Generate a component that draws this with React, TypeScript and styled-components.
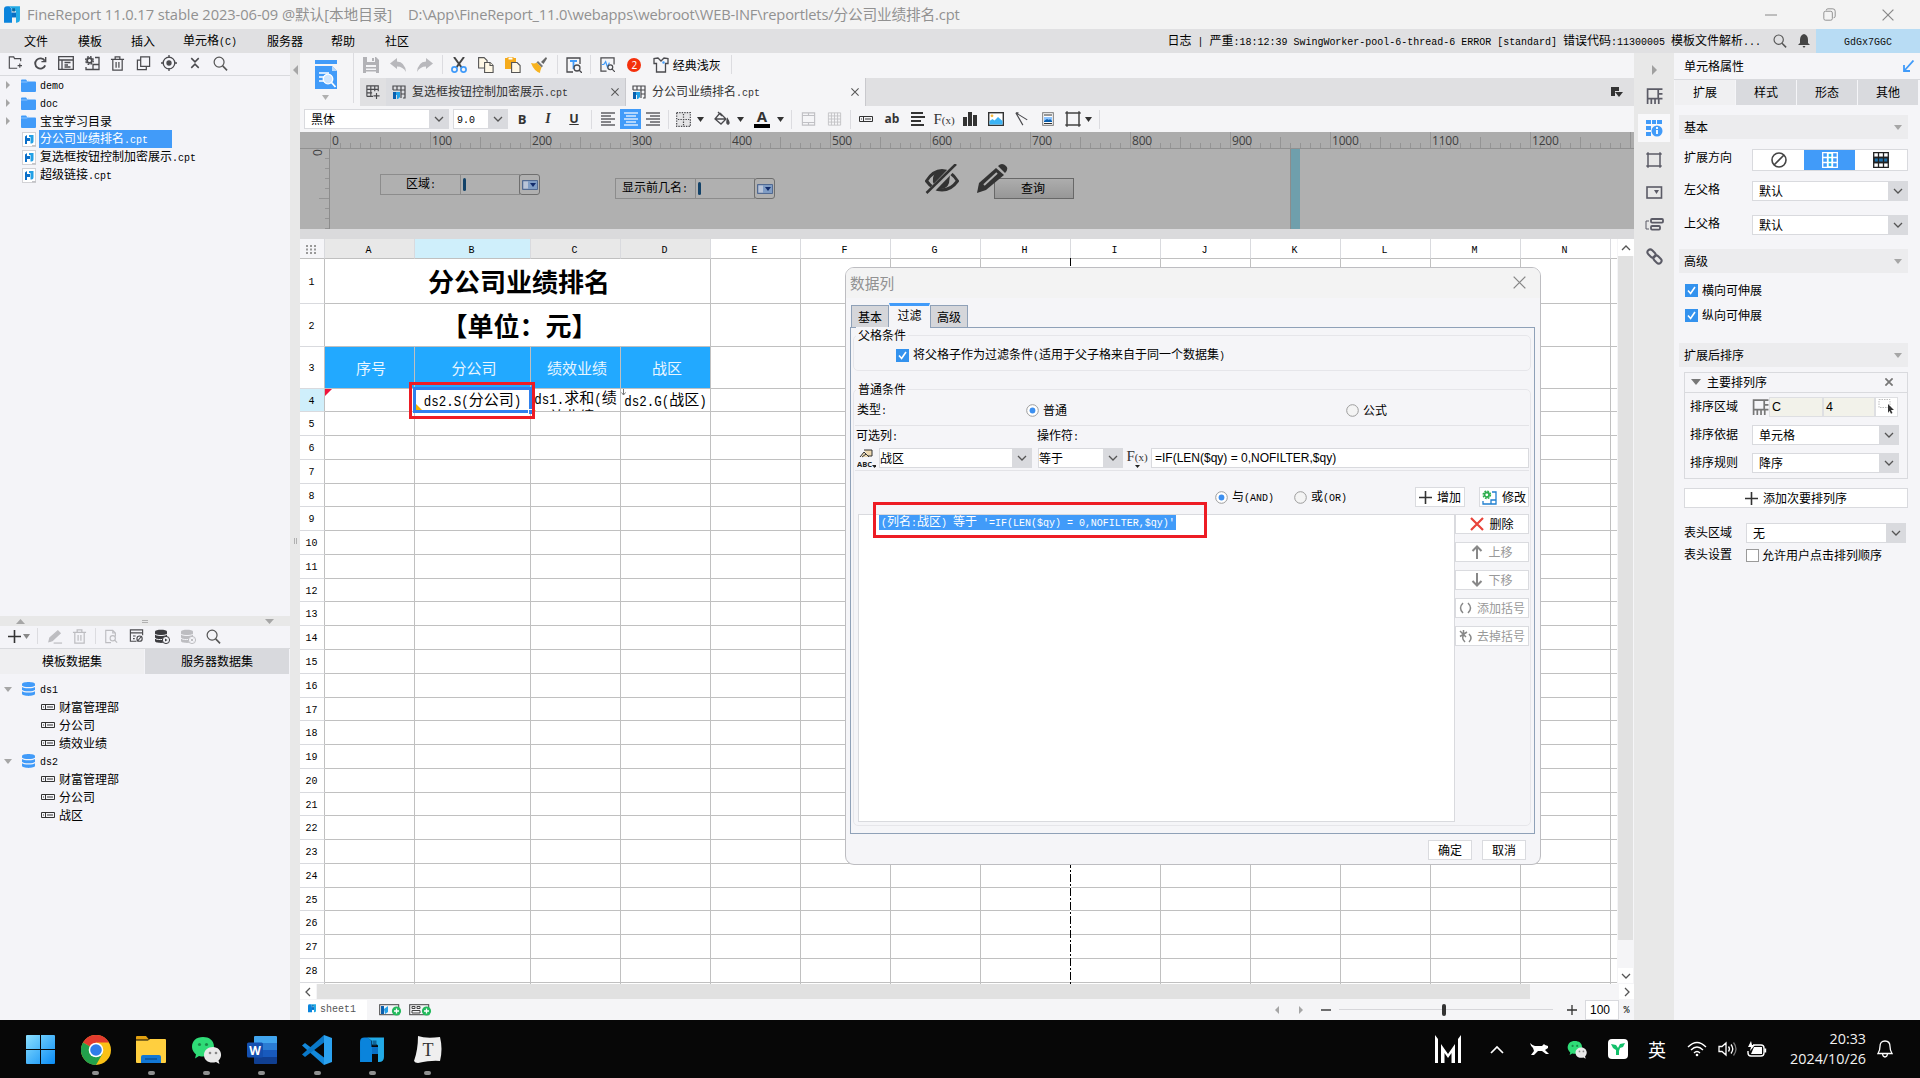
import React from 'react';
import styled, { createGlobalStyle } from 'styled-components';

const CJK = '"Noto Sans CJK SC", sans-serif';

const Global = createGlobalStyle`
  html, body { margin: 0; padding: 0; background: #070707; }
  *, *::before, *::after { box-sizing: border-box; }
  #root { width: 1920px; height: 1078px; overflow: hidden; }
  svg { display: block; flex: none; }
`;

/* ---------- text ---------- */
const Label = styled.span<{ $size?: number; $color?: string; $bold?: boolean }>`
  font-family: ${CJK};
  font-size: ${p => p.$size ?? 12}px;
  line-height: 16px;
  color: ${p => p.$color ?? '#000'};
  font-weight: ${p => (p.$bold ? 700 : 400)};
  white-space: pre;
  flex: none;
`;
const Latin = styled.span`
  display: inline-block;
  font-family: "Liberation Mono", monospace;
  font-size: 0.8333em;
  transform: scaleY(1.18);
`;
type TProps = { children: string; size?: number; color?: string; bold?: boolean };
const T = ({ children, size, color, bold }: TProps) => (
  <Label $size={size} $color={color} $bold={bold}>
    {children.split(/([\x20-\x7e]+)/).filter(Boolean).map((s, i) =>
      /^[\x20-\x7e]/.test(s) ? <Latin key={i}>{s}</Latin> : <React.Fragment key={i}>{s}</React.Fragment>
    )}
  </Label>
);

/* ---------- generic parts ---------- */
const Slot = styled.div<{ $w: number; $bg?: string; $h?: number }>`
  width: ${p => p.$w}px;
  height: ${p => (p.$h ? p.$h + 'px' : '100%')};
  background: ${p => p.$bg ?? 'transparent'};
  flex: none;
  display: flex;
  align-items: center;
  justify-content: center;
`;
const Sep = styled.i<{ $w?: number; $h?: number }>`
  width: ${p => p.$w ?? 8}px;
  height: ${p => p.$h ?? 19}px;
  flex: none;
  background: linear-gradient(#dcdce0, #dcdce0) center / 1px 100% no-repeat;
`;
const Spacer = styled.i<{ $w?: number }>`
  ${p => (p.$w === undefined ? 'flex: 1;' : `width: ${p.$w}px; flex: none;`)}
`;
const Tri = ({ d = 'down', c = '#a6a6a6', w = 8, h = 5 }: { d?: 'down' | 'up' | 'left' | 'right'; c?: string; w?: number; h?: number }) => {
  const pts = { down: `0,0 ${w},0 ${w / 2},${h}`, up: `0,${h} ${w},${h} ${w / 2},0`, left: `${w},0 ${w},${h} 0,${h / 2}`, right: `0,0 0,${h} ${w},${h / 2}` }[d];
  return <svg width={w} height={h}><polygon points={pts} fill={c} /></svg>;
};
const Chevron = ({ r = 0 }: { r?: number }) => (
  <svg width="10" height="10" viewBox="0 0 10 10" transform={`rotate(${r})`}><path d="M1 3l4 4 4-4" fill="none" stroke="#555" strokeWidth="1.3" /></svg>
);
type G = { w?: number; h?: number; vb?: string; c?: string; sw?: number; children: React.ReactNode };
const Ic = ({ w = 16, h = 16, vb, c = '#4a4a4e', sw = 1.3, children }: G) => (
  <svg width={w} height={h} viewBox={vb ?? '0 0 16 16'} fill="none" stroke={c} strokeWidth={sw}>{children}</svg>
);

const ComboBox = styled.div<{ $w: number }>`
  width: ${p => p.$w}px;
  height: 20px;
  flex: none;
  display: flex;
  align-items: center;
  background: #fff;
  border: 1px solid #d9dade;
`;
const ComboText = styled.div<{ $pad: number }>`
  flex: 1;
  display: flex;
  padding-left: ${p => p.$pad}px;
`;
const ComboArrow = styled.div`
  width: 19px;
  height: 18px;
  background: #d9dade;
  display: flex;
  align-items: center;
  justify-content: center;
`;
const Combo = ({ w, pad = 6, children }: { w: number; pad?: number; children: string }) => (
  <ComboBox $w={w}><ComboText $pad={pad}><T>{children}</T></ComboText><ComboArrow><Chevron /></ComboArrow></ComboBox>
);
const Check = ({ on }: { on?: boolean }) => (
  <svg width="13" height="13"><rect x=".5" y=".5" width="12" height="12" fill={on ? '#3392ee' : '#fff'} stroke={on ? '#3392ee' : '#9a9a9a'} />
    {on && <path d="M3 6.5l2.6 3L10 3" fill="none" stroke="#fff" strokeWidth="1.6" />}</svg>
);
const Radio = ({ on }: { on?: boolean }) => (
  <svg width="13" height="13"><circle cx="6.5" cy="6.5" r="5.8" fill={on ? '#fff' : '#f4f4f4'} stroke="#9c9c9c" />{on && <circle cx="6.5" cy="6.5" r="2.9" fill="#3c8ff0" />}</svg>
);

/* ---------- icons ---------- */
const Logo = ({ s = 16 }: { s?: number }) => (
  <svg width={s} height={s * 1.04} viewBox="0 0 24 25">
    <path d="M0 5Q0 .5 4.500.500H8L11.500 4v6H18v7h-6v8H7.500v-1H8V25H0z" fill="#0a84dc" />
    <path d="M12 10h6v7h-6z" fill="#0a6fc4" />
    <path d="M7.500.500H24V20q0 5-5 5h-1V8.500L17 7.500h-5V4z" fill="#22aae6" />
    <path d="M12.500 3.500h4v5h-4z" fill="#0b4f80" opacity=".75" />
  </svg>
);
const Folder = () => <svg width="15" height="13"><path d="M0 1.5Q0 .5 1 .5h4l1.5 2H14q1 0 1 1V12q0 1-1 1H1q-1 0-1-1z" fill="#419bf9" /><path d="M0 3h6l1.500-1" stroke="#8cc4ff" fill="none" /></svg>;
const Cpt = () => (
  <svg width="15" height="15"><rect x=".5" y=".5" width="13" height="14" fill="#fff" stroke="#d2d2d6" /><path d="M3 4.500l2-1.500v3h3v3H5v3H3z" fill="#0a6fc9" /><path d="M7 3h4.500v6.500q0 2-2 2H8.500V5H7z" fill="#22a0e6" /><path d="M10 13h4v1.500h-4z" fill="#c4c4c8" /></svg>
);
const TabGrid = () => (
  <svg width="14" height="14" fill="none" stroke="#4a4a4e" strokeWidth="1.2"><path d="M1 5V1h12v12h-2M1 5h12M5 1v4M9 1v12M9 9h4" /><path d="M1 7h3v7H1z" fill="#0a5fae" stroke="none" /><path d="M4 7h4v5l-2 2H5v-4H4z" fill="#22a0e6" stroke="none" /></svg>
);
const Field = ({ c = '#333' }: { c?: string }) => <svg width="15" height="6" fill="none" stroke={c}><path d="M.5.5h13v5H.500zM4.500.500v5M6 3h6" /><path d="M2 3h1" /></svg>;
const Db = ({ c = '#419bf9', l = '#f4f4f8', w = 13, h = 14 }: { c?: string; l?: string; w?: number; h?: number }) => (
  <svg width={w} height={h} viewBox="0 0 13 14"><path d="M0 2.200C0-.6 13-.6 13 2.200v9.600c0 2.800-13 2.800-13 0z" fill={c} /><path d="M0 4c1 2.200 12 2.200 13 0M0 8.300c1 2.200 12 2.200 13 0" fill="none" stroke={l} strokeWidth="1.200" /></svg>
);
const Mag = ({ s = 15, c = '#555' }: { s?: number; c?: string }) => <Ic w={s} h={s} c={c}><circle cx="6.500" cy="6.500" r="5.300" /><path d="M10.300 10.500L15 15.300" strokeWidth="1.700" /></Ic>;
const Trash = ({ c = '#4a4a4e' }: { c?: string }) => <Ic w={15} h={15} c={c}><path d="M1 3.500h14M5.500 3V1h5v2M3 4v11h10V4M6.500 6.500v6M9.500 6.500v6" /></Ic>;
const DelX = () => <svg width="14" height="14" stroke="#e8433a" strokeWidth="2.200"><path d="M1 1l12 12M13 1L1 13" /></svg>;
const Plus = ({ s = 13, c = '#333', w = 1.6 }: { s?: number; c?: string; w?: number }) => <svg width={s} height={s} viewBox="0 0 13 13" stroke={c} strokeWidth={w}><path d="M6.500 0v13M0 6.500h13" /></svg>;
const CloseX = ({ s = 8, c = '#555', w = 1.3 }: { s?: number; c?: string; w?: number }) => <svg width={s} height={s} viewBox="0 0 10 10" stroke={c} strokeWidth={w}><path d="M.5.5l9 9M9.500.500l-9 9" /></svg>;
const Lines = ({ a, c = '#3a3a3e' }: { a: 'l' | 'c' | 'r'; c?: string }) => (
  <svg width="14" height="14" stroke={c} strokeWidth="1.200">
    {[14, 10, 14, 10, 14].map((w, i) => { const x = a === 'l' ? 0 : a === 'r' ? 14 - w : (14 - w) / 2; return <path key={i} d={`M${x} ${1 + i * 3}h${w}`} />; })}
  </svg>
);
const Frame = ({ c = '#5b5b66', w = 16 }: { c?: string; w?: number }) => <Ic w={w} h={w} c={c} sw={1.5}><path d="M2 2h12v12H2z" /><path d="M.3 2H2M14 2h1.700M.3 14H2M14 14h1.700M2 .3V2M14 .3V2M2 14v1.700M14 14v1.700" /></Ic>;
const CellFrame = ({ c = '#5b5b66' }: { c?: string }) => <Ic w={17} h={17} c={c} sw={1.6}><path d="M1.500 15V1h10v9H1.500M11.500 1h4M11.500 5.500h4M11.500 10h4M5 10v5M8.500 10v5M12 10v5" /></Ic>;
const Gear = ({ c, x = 5, y = 5, r = 3 }: { c: string; x?: number; y?: number; r?: number }) => (
  <g><circle cx={x} cy={y} r={r} stroke={c} strokeWidth="1.800" fill="none" />
    <circle cx={x} cy={y} r={r + 1.4} stroke={c} strokeWidth="1.400" strokeDasharray={`1.800 ${((r + 1.4) * 2 * Math.PI) / 8 - 1.8}`} fill="none" /></g>
);
const Wechat = ({ s = 32 }: { s?: number }) => (
  <svg width={s} height={s} viewBox="0 0 32 32"><path d="M12 3C5 3 1 7 1 13c0 3 2 6 4 7.500l-1 4 4-2.500c8 2 15-2 15-9S18 3 12 3z" fill="#2fdc77" /><circle cx="8.500" cy="10.500" r="1.600" fill="#1b8a49" /><circle cx="15.500" cy="10.500" r="1.600" fill="#1b8a49" /><path d="M22 13c-5 0-9 3-9 8 0 6 6 9 12 7l3.500 2-1-3.500C33 21 29 13 22 13z" fill="#e9e9e9" /><circle cx="19" cy="19" r="1.300" fill="#888" /><circle cx="25" cy="19" r="1.300" fill="#888" /></svg>
);

/* ---------- frame ---------- */
const Shell = styled.div`
  width: 1920px;
  height: 1078px;
  display: flex;
  flex-direction: column;
  background: #f5f5f7;
  overflow: hidden;
`;
const TitleBar = styled.header`
  height: 29px;
  flex: none;
  background: #f3f3f3;
  display: flex;
  align-items: center;
  padding-left: 4px;
`;
const TitleText = styled.span<{ $ls: number; $w: number }>`
  font: 14.7px/20px "Open Sans", ${CJK};
  letter-spacing: ${p => p.$ls}px;
  width: ${p => p.$w}px;
  flex: none;
  padding-bottom: 2px;
  color: #919191;
  white-space: pre;
`;
const WinCtl = styled.div`
  display: flex;
  align-items: center;
  height: 29px;
`;
const MenuBar = styled.nav`
  height: 24px;
  flex: none;
  background: #e0e0e2;
  display: flex;
  align-items: center;
  padding-left: 24px;
`;
const MenuItem = styled.div<{ $w: number }>`
  width: ${p => p.$w}px;
  display: flex;
`;
const Account = styled.div`
  width: 104px;
  height: 24px;
  background: #b8dcf4;
  display: flex;
  align-items: center;
  justify-content: center;
`;
const Body = styled.div`
  height: 967px;
  flex: none;
  display: flex;
`;
const LeftPane = styled.aside`
  width: 290px;
  flex: none;
  display: flex;
  flex-direction: column;
  background: #f4f4f8;
`;
const Tools = styled.div<{ $h: number; $pl?: number; $line?: boolean; $up?: boolean }>`
  height: ${p => p.$h}px;
  flex: none;
  display: flex;
  align-items: center;
  padding-left: ${p => p.$pl ?? 0}px;
  padding-bottom: ${p => (p.$up ? 2 : 0)}px;
  border-bottom: ${p => (p.$line ? '1px solid #d9dade' : 'none')};
`;
const Tree = styled.div<{ $h: number; $pt: number }>`
  height: ${p => p.$h}px;
  flex: none;
  padding-top: ${p => p.$pt}px;
`;
const TreeRow = styled.div`
  height: 18px;
  display: flex;
  align-items: center;
`;
const TreeText = styled.div<{ $sel?: boolean }>`
  height: 18px;
  width: ${p => (p.$sel ? '133px' : 'auto')};
  background: ${p => (p.$sel ? '#419bf9' : 'transparent')};
  display: flex;
  align-items: center;
  padding-left: 1px;
`;
const HSplit = styled.div`
  height: 10px;
  flex: none;
  background: #e8e8e8;
  display: flex;
  align-items: center;
  justify-content: space-between;
  padding: 0 16px;
`;
const VSplit = styled.div`
  width: 10px;
  flex: none;
  background: #e8e8e8;
  display: flex;
  flex-direction: column;
  align-items: center;
  padding-top: 12px;
  gap: 463px;
`;
const Grip = styled.i<{ $v?: boolean }>`
  width: ${p => (p.$v ? 3 : 6)}px;
  height: ${p => (p.$v ? 6 : 3)}px;
  border: solid #b0b0b0;
  border-width: ${p => (p.$v ? '0 1px' : '1px 0')};
`;
const TwoTabs = styled.div`
  display: flex;
  height: 25px;
  flex: none;
  gap: 1px;
`;
const TwoTab = styled.div<{ $on?: boolean }>`
  width: 144px;
  background: ${p => (p.$on ? '#efeff1' : '#d8d9dd')};
  padding-bottom: 2px;
  display: flex;
  align-items: center;
  justify-content: center;
`;

/* ---------- centre ---------- */
const Center = styled.main`
  width: 1334px;
  flex: none;
  display: flex;
  flex-direction: column;
`;
const TopGroup = styled.div`
  display: flex;
  height: 53px;
  flex: none;
`;
const Preview = styled.div`
  width: 50px;
  height: 53px;
  display: flex;
  flex-direction: column;
  align-items: center;
  gap: 6px;
  padding-top: 7px;
  padding-left: 1px;
`;
const TopCol = styled.div`
  flex: 1;
  display: flex;
  flex-direction: column;
`;
const FileTabs = styled.div`
  height: 28px;
  margin-left: 4px;
  background: #e0e0e2;
  display: flex;
  align-items: center;
`;
const FileTab = styled.div<{ $on?: boolean }>`
  width: 240px;
  height: 28px;
  display: flex;
  align-items: center;
  gap: 6px;
  padding: 0 6px 0 6px;
  background: ${p => (p.$on ? '#f5f5f7' : '#dbdce0')};
  border-right: 1px solid #c9c9cd;
`;
const Badge = styled.span`
  width: 14px;
  height: 14px;
  border-radius: 7px;
  background: #f4300c;
  color: #fff;
  font: 10px/14px "Noto Sans", sans-serif;
  text-align: center;
`;
const Glyph = styled.span<{ $f?: string; $s?: number; $b?: boolean; $i?: boolean; $u?: boolean; $c?: string }>`
  font-family: ${p => p.$f ?? '"Open Sans", sans-serif'};
  font-size: ${p => p.$s ?? 13}px;
  line-height: 16px;
  font-weight: ${p => (p.$b ? 700 : 400)};
  font-style: ${p => (p.$i ? 'italic' : 'normal')};
  text-decoration: ${p => (p.$u ? 'underline' : 'none')};
  color: ${p => p.$c ?? '#333'};
  white-space: pre;
`;
const FontColor = styled.div`
  width: 16px;
  height: 18px;
  border-bottom: 4px solid #000;
  font: 700 15px/13px "Open Sans", sans-serif;
  color: #333;
  text-align: center;
`;

const Canvas = styled.section`
  height: 97px;
  flex: none;
  background: #b0b0b0;
  position: relative;
  overflow: hidden;
`;
const Ruler = styled.div`
  height: 17px;
  display: flex;
  padding-left: 30px;
  border-bottom: 1px solid #909090;
  background: #acacac;
`;
const Unit = styled.div`
  width: 100px;
  height: 16px;
  flex: none;
  display: flex;
  align-items: flex-end;
  position: relative;
`;
const Tick = styled.i<{ $h: number }>`
  width: 10px;
  height: ${p => p.$h}px;
  border-left: 1px solid #949494;
`;
const RulerNum = styled.span`
  position: absolute;
  left: 2px;
  top: 0;
  font: 12px/17px "Open Sans", sans-serif;
  letter-spacing: -0.2px;
  color: #3f3f3f;
`;
const SideRuler = styled.div`
  width: 30px;
  height: 80px;
  border-right: 1px solid #8c8c8c;
  display: flex;
  flex-direction: column;
  align-items: flex-end;
  padding-top: 9px;
  position: relative;
`;
const SideTick = styled.i<{ $w: number }>`
  height: 10px;
  width: ${p => p.$w}px;
  flex: none;
  border-top: 1px solid #949494;
`;
const SideNum = styled.span`
  position: absolute;
  left: 14px;
  top: -5px;
  font: 12px/17px "Open Sans", sans-serif;
  color: #3f3f3f;
  transform: rotate(-90deg);
`;
const Bound = styled.i`
  position: absolute;
  left: 990px;
  top: 17px;
  width: 10px;
  height: 80px;
  background: #6f9fac;
  border-left: 1px solid #8c8c8c;
`;
const Widget = styled.div<{ $x: number; $y: number }>`
  position: absolute;
  left: ${p => p.$x}px;
  top: ${p => p.$y}px;
  display: flex;
`;
const WBox = styled.div<{ $w: number; $pl?: number }>`
  width: ${p => p.$w}px;
  height: 21px;
  border: 1px solid #8c8c8c;
  margin-right: -1px;
  display: flex;
  align-items: center;
  padding-left: ${p => p.$pl ?? 0}px;
`;
const WCaret = styled.i`
  width: 3px;
  height: 13px;
  border-radius: 2px;
  background: #134268;
`;
const WBtn = styled.div`
  width: 21px;
  height: 21px;
  border: 1px solid #6f6f6f;
  border-radius: 3px;
  display: flex;
  align-items: center;
  justify-content: center;
`;
const QueryBtn = styled.div`
  width: 80px;
  height: 21px;
  border: 1px solid #686868;
  background: linear-gradient(#adadad, #979797);
  display: flex;
  align-items: center;
  justify-content: center;
  padding: 0 2px 1px 0;
`;
const Band = styled.div`
  height: 10px;
  flex: none;
  background: #dadadc;
`;

/* ---------- sheet ---------- */
const Sheet = styled.section`
  height: 745px;
  flex: none;
  display: flex;
  position: relative;
`;
const Grid = styled.div`
  width: 1317px;
  height: 745px;
  overflow: hidden;
  background: #fff;
  position: relative;
`;
const GRow = styled.div<{ $h: number }>`
  height: ${p => p.$h}px;
  display: flex;
  overflow: hidden;
`;
const Head = styled.div<{ $w: number; $bg?: string }>`
  width: ${p => p.$w}px;
  flex: none;
  background: ${p => p.$bg ?? '#fff'};
  border-right: 1px solid #d9dade;
  border-bottom: 1px solid #c0c0c0;
  display: flex;
  align-items: center;
  justify-content: center;
  padding: 2px 2px 0 0;
`;
const RowNo = styled(Head)`
  border-right-color: #c0c0c0;
  border-bottom-color: #d9dade;
  padding: 0 1px 0 0;
`;
const Cell = styled.div<{ $w: number; $bg?: string; $top?: boolean; $pl?: number }>`
  width: ${p => p.$w}px;
  flex: none;
  background: ${p => p.$bg ?? '#fff'};
  border-right: 1px solid #c0c0c0;
  border-bottom: 1px solid #c0c0c0;
  padding-left: ${p => p.$pl ?? 0}px;
  display: flex;
  flex-direction: column;
  align-items: center;
  justify-content: ${p => (p.$top ? 'flex-start' : 'center')};
  position: relative;
  overflow: hidden;
`;
const Clip = styled.div`
  line-height: 18px;
  height: 19px;
  flex: none;
`;
const Corner = styled.svg<{ $b?: boolean }>`
  position: absolute;
  left: 0;
  ${p => (p.$b ? 'bottom: 0;' : 'top: 0;')}
`;
const Selection = styled.div`
  position: absolute;
  left: 113px;
  top: 148px;
  width: 119px;
  height: 26px;
  border: 3px solid #2f80ed;
  &::after {
    content: '';
    position: absolute;
    right: -4px;
    bottom: -4px;
    width: 5px;
    height: 5px;
    background: #2f80ed;
    border: solid #fff;
    border-width: 1px 0 0 1px;
  }
`;
const Marker = styled.div<{ $x: number; $y: number; $w: number; $h: number }>`
  position: absolute;
  left: ${p => p.$x}px;
  top: ${p => p.$y}px;
  width: ${p => p.$w}px;
  height: ${p => p.$h}px;
  border: 3px solid #ed1c24;
`;
const PageBreak = styled.i`
  position: absolute;
  left: 770px;
  top: 19px;
  width: 1px;
  height: 726px;
  background: repeating-linear-gradient(#000 0 8px, #fff 8px 10px, #000 10px 12px, #fff 12px 14px);
`;
const VScroll = styled.div`
  width: 17px;
  height: 745px;
  background: #f5f5f7;
  display: flex;
  flex-direction: column;
  align-items: center;
  padding-bottom: 1px;
`;
const Arrow = styled.div<{ $w: number; $h: number }>`
  width: ${p => p.$w}px;
  height: ${p => p.$h}px;
  flex: none;
  background: #fff;
  display: flex;
  align-items: center;
  justify-content: center;
`;
const Thumb = styled.i<{ $w: number; $h: number }>`
  width: ${p => p.$w}px;
  height: ${p => p.$h}px;
  flex: none;
  background: #e1e1e1;
`;
const HScroll = styled.div`
  height: 15px;
  flex: none;
  display: flex;
  align-items: center;
  justify-content: flex-start;
  gap: 1px;
`;
const SheetBar = styled.div`
  height: 21px;
  flex: none;
  display: flex;
  align-items: center;
`;
const SheetTab = styled.div`
  width: 67px;
  height: 20px;
  background: #fff;
  display: flex;
  align-items: center;
  gap: 4px;
  padding: 0 0 2px 8px;
`;
const Track = styled.div`
  width: 214px;
  height: 12px;
  display: flex;
  align-items: center;
  padding-left: 103px;
  background: linear-gradient(#d6d6da, #d6d6da) center / 100% 1px no-repeat;
`;
const Knob = styled.i`
  width: 4px;
  height: 12px;
  border-radius: 2px;
  background: #333;
`;
const ZoomBox = styled.div`
  width: 34px;
  height: 20px;
  border: 1px solid #d9dade;
  background: #fff;
  font: 12px/18px "Liberation Sans", sans-serif;
  padding-left: 4px;
`;

/* ---------- right ---------- */
const Rail = styled.div`
  width: 40px;
  flex: none;
  background: #e8e8e8;
  display: flex;
  flex-direction: column;
  align-items: center;
  gap: 4px;
`;
const RailToggle = styled.div`
  height: 25px;
  flex: none;
  padding-top: 12px;
`;
const RailItem = styled.div<{ $on?: boolean }>`
  width: 32px;
  height: 28px;
  flex: none;
  background: ${p => (p.$on ? '#f8f8fa' : 'transparent')};
  display: flex;
  align-items: center;
  justify-content: center;
`;
const RightPane = styled.aside`
  width: 246px;
  flex: none;
  background: #f5f5f8;
  display: flex;
  flex-direction: column;
`;
const PropTabs = styled.div`
  height: 25px;
  flex: none;
  display: flex;
  gap: 1px;
  margin-left: 1px;
`;
const PropTab = styled.div<{ $on?: boolean }>`
  width: 60px;
  background: ${p => (p.$on ? '#f0f0f2' : '#d9dade')};
  padding-bottom: 1px;
  display: flex;
  align-items: center;
  justify-content: center;
`;
const Section = styled.div<{ $mt: number }>`
  height: 24px;
  flex: none;
  margin: ${p => p.$mt}px 12px 0 5px;
  padding: 0 6px 0 5px;
  background: #ececee;
  display: flex;
  align-items: center;
  justify-content: space-between;
`;
const PRow = styled.div<{ $mt: number; $lab?: number; $pl?: number; $lift?: number }>`
  height: 20px;
  flex: none;
  margin-top: ${p => p.$mt}px;
  padding-left: ${p => p.$pl ?? 10}px;
  display: flex;
  align-items: center;
  & > span:first-child {
    width: ${p => (p.$lab ? p.$lab + 'px' : 'auto')};
    margin-top: -${p => p.$lift ?? 0}px;
  }
`;
const Segments = styled.div`
  height: 22px;
  width: 156px;
  border: 1px solid #d9dade;
  background: #fff;
  display: flex;
`;
const SortBox = styled.div`
  width: 224px;
  height: 107px;
  flex: none;
  margin: 5px 0 0 10px;
  border: 1px solid #d9dade;
`;
const SortHead = styled.div`
  height: 20px;
  border-bottom: 1px solid #d9dade;
  display: flex;
  align-items: center;
  padding: 0 14px 1px 6px;
  gap: 6px;
`;
const RefInput = styled.div<{ $w: number; $bg?: string }>`
  width: ${p => p.$w}px;
  height: 20px;
  border: 1px solid #dedfe2;
  background: ${p => p.$bg ?? '#f2f2ea'};
  font: 12.5px/18px "Liberation Sans", sans-serif;
  padding-left: 2px;
`;
const WideBtn = styled.div`
  width: 224px;
  height: 20px;
  flex: none;
  margin: 9px 0 0 10px;
  border: 1px solid #d9dade;
  background: #fff;
  display: flex;
  align-items: center;
  justify-content: center;
  gap: 5px;
`;

/* ---------- dialog ---------- */
const Dialog = styled.div`
  position: absolute;
  left: 845px;
  top: 267px;
  width: 696px;
  height: 598px;
  border: 1px solid #bdbdc1;
  border-radius: 9px;
  background: #f5f5f8;
  overflow: hidden;
  display: flex;
  flex-direction: column;
`;
const DlgTitle = styled.div`
  height: 30px;
  flex: none;
  background: #f3f3f3;
  display: flex;
  align-items: center;
  justify-content: space-between;
  padding: 0 14px 1px 4px;
`;
const DlgTabs = styled.div`
  height: 29px;
  flex: none;
  display: flex;
  align-items: flex-end;
  padding-left: 5px;
  position: relative;
  z-index: 1;
`;
const DlgTab = styled.div<{ $on?: boolean }>`
  width: ${p => (p.$on ? 41 : 38)}px;
  height: ${p => (p.$on ? 25 : 22)}px;
  margin-bottom: ${p => (p.$on ? -1 : 0)}px;
  padding-bottom: ${p => (p.$on ? 4 : 0)}px;
  background: ${p => (p.$on ? '#f5f5f8' : '#d5d6da')};
  border: 1px solid ${p => (p.$on ? 'transparent' : '#8fa1b8')};
  border-top: ${p => (p.$on ? '3px solid #419bf9' : '1px solid #8fa1b8')};
  border-bottom: none;
  display: flex;
  align-items: center;
  justify-content: center;
`;
const DlgPanel = styled.div`
  height: 507px;
  width: 685px;
  flex: none;
  margin-left: 4px;
  border: 1px solid #8fa1b8;
  padding: 7px 3px 8px 2px;
  display: flex;
  flex-direction: column;
  gap: 18px;
`;
const Group = styled.div<{ $h: number }>`
  height: ${p => p.$h}px;
  flex: none;
  border: 1px solid #e6e6ea;
  border-radius: 5px;
  display: flex;
  flex-direction: column;
`;
const Legend = styled.div`
  height: 16px;
  margin: -9px 0 -2px 2px;
  padding: 0 2px;
  background: #f5f5f8;
  align-self: flex-start;
  display: flex;
  align-items: center;
  flex: none;
`;
const DRow = styled.div<{ $h: number; $pl: number; $line?: boolean; $pt?: number }>`
  height: ${p => p.$h}px;
  flex: none;
  margin: 0 1px 0 1px;
  padding-left: ${p => p.$pl}px;
  padding-top: ${p => p.$pt ?? 0}px;
  display: flex;
  align-items: center;
  border-bottom: ${p => (p.$line ? '1px solid #e3e3e7' : 'none')};
`;
const FieldLabel = styled.div<{ $w: number }>`
  width: ${p => p.$w}px;
  flex: none;
  display: flex;
`;
const FxBtn = styled.div`
  width: 28px;
  flex: none;
  display: flex;
  flex-direction: column;
  align-items: center;
`;
const Formula = styled.div`
  width: 378px;
  height: 20px;
  border: 1px solid #d9dade;
  background: #fff;
  font: 12px/18px "Liberation Sans", sans-serif;
  padding-left: 3px;
`;
const Btn = styled.div<{ $w: number }>`
  width: ${p => p.$w}px;
  height: 20px;
  flex: none;
  border: 1px solid #dadbdf;
  background: #fff;
  display: flex;
  align-items: center;
  justify-content: center;
  gap: 5px;
`;
const ListArea = styled.div`
  display: flex;
  height: 308px;
  flex: none;
  margin-left: 4px;
`;
const List = styled.div`
  width: 597px;
  border: 1px solid #d9dade;
  background: #fff;
  padding-left: 20px;
`;
const Picked = styled.div`
  width: 297px;
  height: 15px;
  background: #419bf9;
  display: flex;
  align-items: center;
  padding-left: 2px;
`;
const BtnCol = styled.div`
  display: flex;
  flex-direction: column;
  gap: 8px;
`;
const DlgFoot = styled.div`
  display: flex;
  justify-content: flex-end;
  gap: 10px;
  padding: 6px 14px 0 0;
`;

/* ---------- taskbar ---------- */
const Taskbar = styled.footer`
  height: 58px;
  flex: none;
  background: #070707;
  display: flex;
  padding-left: 13px;
`;
const Launcher = styled.div`
  width: 55.3px;
  height: 58px;
  flex: none;
  display: flex;
  flex-direction: column;
  align-items: center;
  padding-top: 13px;
  gap: 5px;
`;
const AppIcon = styled.div`
  height: 33px;
  display: flex;
  align-items: center;
`;
const Dot = styled.i`
  width: 7px;
  height: 4px;
  border-radius: 2px;
  background: #8f8f8f;
`;
const Tray = styled.div`
  display: flex;
  align-items: center;
  height: 58px;
`;
const Clock = styled.div`
  width: 89px;
  display: flex;
  flex-direction: column;
  align-items: flex-end;
  font: 14.3px/20px "Open Sans", sans-serif;
  color: #f2f2f2;
`;

/* ---------- data ---------- */
const lineYs = [258, 303, 346, 388];
for (let k = 0; k <= 24; k++) lineYs.push(Math.round(411.4 + 23.76 * k));
const heights = lineYs.slice(1).map((y, i) => y - lineYs[i]);
const letters = 'ABCDEFGHIJKLMN'.split('');
const colW = (l: string) => (l === 'B' ? 116 : 90);
const rest = letters.slice(4);
const blue = '#22a9ff';
const headers: [string, number][] = [['序号', 90], ['分公司', 116], ['绩效业绩', 90], ['战区', 90]];
const menus: [string, number][] = [['文件', 54], ['模板', 53], ['插入', 52], ['单元格(C)', 84], ['服务器', 64], ['帮助', 54], ['社区', 60]];

const Down = ({ c = '#333' }: { c?: string }) => <Tri c={c} w={7} h={5} />;
const GroupArrow = () => (
  <Corner width="6" height="7"><path d="M2.500 0v6M.5 3.500l2 2.500 2-2.500" stroke="#777" fill="none" /></Corner>
);
const Fx = () => <Glyph $f='"Liberation Serif", serif' $s={15}>F<Glyph $f='"Liberation Serif", serif' $s={11}>(x)</Glyph></Glyph>;

const LeftSide = () => (
  <LeftPane>
    <Tools $h={23} $pl={2} $line $up>
      <Slot $w={25.7}><Ic w={16} h={14}><path d="M14.500 6V3h-7l-1-2h-5v13h9M11 11h5M13.500 8.500v5" /></Ic></Slot>
      <Slot $w={25.7}><Ic w={15} h={15} sw={2}><path d="M13 10a5.500 5.500 0 1 1-.5-5" /><path d="M13.500 1v5H9" strokeWidth="1.500" /></Ic></Slot>
      <Slot $w={25.7}><Ic w={16} h={14} vb="0 0 16 14"><path d="M.7.7h14.600v12.600H.7zM.7 4h14.600M4 4v9M6.500 6.500h6M6.500 9h3.500M6.500 11h6" /></Ic></Slot>
      <Slot $w={25.7}><Ic w={16} h={16}><Gear c="#4a4a4e" x={5.5} y={5.500} r={2.4} /><path d="M11 2.500h4v12H2V12M9 14V9.500h6" /></Ic></Slot>
      <Slot $w={25.7}><Trash /></Slot>
      <Slot $w={25.7}><Ic w={15} h={15}><path d="M5 1h9.500v10H5zM5 4.500H1.500v10H11V11" /></Ic></Slot>
      <Slot $w={25.7}><Ic w={16} h={16}><circle cx="8" cy="8" r="5.800" /><circle cx="8" cy="8" r="2" fill="#4a4a4e" /><path d="M8 0v3M8 13v3M0 8h3M13 8h3" /></Ic></Slot>
      <Slot $w={25.7}><Ic w={12} h={14} sw={2}><path d="M3 1.500l5 5 5-5M3 14.500l5-5 5 5" strokeWidth="2" /></Ic></Slot>
      <Slot $w={25.7}><Mag /></Slot>
    </Tools>
    <Tree $h={540} $pt={0}>
      {['demo', 'doc', '宝宝学习目录'].map(t => (
        <TreeRow key={t}><Spacer $w={6} /><Tri d="right" w={4} h={8} /><Spacer $w={11} /><Folder /><Spacer $w={3} /><TreeText><T>{t}</T></TreeText></TreeRow>
      ))}
      {['分公司业绩排名.cpt', '复选框按钮控制加密展示.cpt', '超级链接.cpt'].map((t, i) => (
        <TreeRow key={t}><Spacer $w={22} /><Cpt /><Spacer $w={2} /><TreeText $sel={i === 0}><T color={i === 0 ? '#fff' : '#000'}>{t}</T></TreeText></TreeRow>
      ))}
    </Tree>
    <HSplit><Tri d="up" w={9} h={5} /><Grip /><Tri w={9} h={5} /></HSplit>
    <Tools $h={23} $line $up>
      <Spacer $w={8} /><Plus /><Spacer $w={2} /><Down c="#888" /><Sep $w={14} $h={16} />
      <Slot $w={23}><Ic w={15} h={15} c="#bdbdc1"><path d="M6 15h9" /><path d="M1 13.500l1-4 8.500-7.500 2.500 2.500-8.500 8z" fill="#bdbdc1" /></Ic></Slot>
      <Slot $w={25}><Trash c="#bdbdc1" /></Slot>
      <Sep $w={6} $h={16} />
      <Slot $w={25}><Ic w={14} h={15} c="#bdbdc1"><path d="M8 15H2V1h8l3 3v4M10 1v3h3" /><circle cx="10" cy="10" r="3" /><path d="M12 12l3 3" /></Ic></Slot>
      <Slot $w={26}><Ic w={15} h={14}><path d="M8 14H1V1h14v6M1 4.500h14M4 8h3M4 11h2" /><circle cx="11.500" cy="11" r="3" /><path d="M9 14l5-6" /></Ic></Slot>
      <Slot $w={26}><svg width="15" height="15" viewBox="0 0 15 15"><path d="M0 2.500C0 0 12 0 12 2.500V12c0 2.500-12 2.500-12 0z" fill="#3c3c40" /><path d="M0 5c1 2 11 2 12 0M0 9c1 2 6 1.500 7 1.500" fill="none" stroke="#f4f4f8" /><circle cx="11" cy="11" r="3.600" fill="#f4f4f8" stroke="#3c3c40" /><path d="M10 9.500v3l2.500-1.500z" fill="#3c3c40" /></svg></Slot>
      <Slot $w={26}><svg width="15" height="15" viewBox="0 0 15 15"><path d="M0 2.500C0 0 12 0 12 2.500V12c0 2.500-12 2.500-12 0z" fill="#bdbdc1" /><path d="M0 5c1 2 11 2 12 0M0 9c1 2 6 1.500 7 1.500" fill="none" stroke="#f4f4f8" /><circle cx="11" cy="11" r="3.600" fill="#f4f4f8" stroke="#bdbdc1" /><path d="M9.800 9.800l2.400 2.400M12.200 9.800l-2.400 2.400" stroke="#bdbdc1" /></svg></Slot>
      <Slot $w={25}><Mag /></Slot>
    </Tools>
    <TwoTabs><TwoTab $on><T>模板数据集</T></TwoTab><TwoTab><T>服务器数据集</T></TwoTab></TwoTabs>
    <Tree $h={300} $pt={6}>
      {[['ds1', '财富管理部', '分公司', '绩效业绩'], ['ds2', '财富管理部', '分公司', '战区']].map(([d, ...kids]) => (
        <React.Fragment key={d}>
          <TreeRow><Spacer $w={4} /><Tri w={8} h={5} /><Spacer $w={10} /><Db /><Spacer $w={4} /><TreeText><T>{d}</T></TreeText></TreeRow>
          {kids.map(k => <TreeRow key={k}><Spacer $w={41} /><Field /><Spacer $w={2} /><TreeText><T>{k}</T></TreeText></TreeRow>)}
        </React.Fragment>
      ))}
    </Tree>
  </LeftPane>
);

const Toolbars = () => (
  <>
    <TopGroup>
      <Preview>
        <svg width="22" height="29" viewBox="0 0 22 29"><path d="M0 0h22v4H0zM0 6h17l5 5v18H0z" fill="#419bf9" /><path d="M17 6v5h5z" fill="#b9dafc" /><path d="M4 13h10M4 17h5M4 21h5" stroke="#fff" strokeWidth="1.500" /><circle cx="13" cy="19" r="4.800" fill="#cfe5fd" stroke="#fff" strokeWidth="1.300" /><path d="M16.500 22.500l4 4.500" stroke="#fff" strokeWidth="1.800" /></svg>
        <Down c="#b0b0b0" />
      </Preview>
      <Sep $w={6} $h={50} />
      <TopCol>
        <Tools $h={25} $pl={2} $up>
          <Slot $w={26.7}><svg width="16" height="16"><path d="M0 0h13l3 3v13H0z" fill="#b2b2b6" /><path d="M4 0h8v5H4zM3 8h10v8H3z" fill="#f5f5f7" /><path d="M9 1h2v3H9zM3 10h10v1.500H3zM3 13h10v1.500H3z" fill="#b2b2b6" /></svg></Slot>
          <Slot $w={26.7}><svg width="16" height="14"><path d="M0 5.500L7 0v3.500q8 .5 9 10.500-3-5.500-9-5.500V11z" fill="#b8b8bc" /></svg></Slot>
          <Slot $w={26.7}><svg width="16" height="14"><path d="M16 5.500L9 0v3.500Q1 4 0 14q3-5.500 9-5.500V11z" fill="#b8b8bc" /></svg></Slot>
          <Sep $w={8} />
          <Slot $w={26.7}><svg width="16" height="16" fill="none"><path d="M3 0l8 11M13 0L5 11" stroke="#444" strokeWidth="2" /><circle cx="3.500" cy="12.500" r="2.600" stroke="#419bf9" strokeWidth="1.700" /><circle cx="12.500" cy="12.500" r="2.600" stroke="#419bf9" strokeWidth="1.700" /></svg></Slot>
          <Slot $w={26.7}><svg width="16" height="16" fill="#fff8e6" stroke="#555" strokeWidth="1.100"><path d="M.6.6h5.500l3 3V11H.6z" /><path d="M6.600 5.500h5.500l3 3v7H6.600z" /><path d="M12 5.500v3h3" /></svg></Slot>
          <Slot $w={26.7}><svg width="16" height="16"><path d="M0 1h11v11H0z" fill="#f5ab1c" /><path d="M3 0h5v3H3z" fill="#fff" stroke="#f5ab1c" /><path d="M6.600 5.500h5.500l3 3v7H6.600z" fill="#fff8e6" stroke="#555" strokeWidth="1.100" /></svg></Slot>
          <Slot $w={26.7}><svg width="16" height="16"><path d="M10 5l5-5 1 1.500L12.500 7z" fill="#666" /><path d="M7 4l5 5-1.500 1.500L5.500 5.500z" fill="#777" /><path d="M0 6q4 1 5.500-.5l5 5Q9 14 9 16 3 14 0 6z" fill="#f8b31e" /></svg></Slot>
          <Sep $w={9} />
          <Slot $w={24}><Ic w={16} h={16}><path d="M7 15H1V1h13v6" /><path d="M4 4h7M7.500 4v8" stroke="#419bf9" strokeWidth="1.800" /><circle cx="11" cy="11" r="3" /><path d="M13 13l3 3" /></Ic></Slot>
          <Sep $w={10} />
          <Slot $w={24}><Ic w={15} h={15}><path d="M7 15H1V1h14v7" /><path d="M2 8h2l2-3 2 6 2-5" stroke="#419bf9" /><circle cx="11" cy="11" r="2.600" /><path d="M13 13l3 3" /></Ic></Slot>
          <Slot $w={29}><Badge>2</Badge></Slot>
          <Slot $w={24}><Ic w={16} h={16}><path d="M5 1L1 1.500v5h2.500V15h9V6.500H15v-5L11 1 8 4z" /><circle cx="10.500" cy="5.500" r=".6" stroke="#419bf9" /></Ic></Slot>
          <T>经典浅灰</T>
          <Sep $w={22} />
        </Tools>
        <FileTabs>
          <Slot $w={26}><Ic w={14} h={14}><path d="M1 13V1h13v6M1 5h13M5.500 1v12M10 1v6M1 9h6M1 13h7M12 9v7M8.500 12.500h7" /></Ic></Slot>
          <FileTab><TabGrid /><T color="#333">复选框按钮控制加密展示.cpt</T><Spacer /><CloseX /></FileTab>
          <FileTab $on><TabGrid /><T color="#333">分公司业绩排名.cpt</T><Spacer /><CloseX /></FileTab>
          <Spacer />
          <svg width="12" height="11"><path d="M0 0h8v4H4v5H0z" fill="#333" /><path d="M4 5h8l-4 5z" fill="#333" /></svg>
          <Spacer $w={11} />
        </FileTabs>
      </TopCol>
    </TopGroup>
    <Tools $h={26} $pl={4}>
      <Combo w={145}>黑体</Combo><Spacer $w={4} /><Combo w={55} pad={3}>9.0</Combo><Spacer $w={1} />
      <Slot $w={26}><Glyph $b $s={13}>B</Glyph></Slot>
      <Slot $w={26}><Glyph $i $f='"Liberation Serif", serif' $b $s={14}>I</Glyph></Slot>
      <Slot $w={26}><Glyph $u $b $s={12.5}>U</Glyph></Slot>
      <Sep $w={9} />
      <Slot $w={24}><Lines a="l" /></Slot>
      <Slot $w={21} $h={20} $bg="#419bf9"><Lines a="c" c="#fff" /></Slot>
      <Slot $w={23}><Lines a="r" /></Slot>
      <Sep $w={9} />
      <Slot $w={21}><Ic w={15} h={15}><path d="M.7.7h14.600v14.600H.7z" strokeDasharray="1.500 1.200" fill="#e4e4e6" /><path d="M8 2v12M2 8h12" strokeDasharray="1.500 1.200" /></Ic></Slot>
      <Slot $w={13}><Down /></Slot><Spacer $w={3} />
      <Slot $w={24}><Ic w={16} h={16}><path d="M6 2l6 6-5 5-6-5 5-6M4 1l4 4M1.500 8H12" /><path d="M13.500 8q2.500 4 1 5-2 .5-1.500-3z" fill="#4a4a4e" /></Ic></Slot>
      <Slot $w={13}><Down /></Slot><Spacer $w={3} />
      <Slot $w={24}><FontColor>A</FontColor></Slot>
      <Slot $w={13}><Down /></Slot>
      <Sep $w={9} />
      <Slot $w={25}><Ic w={15} h={14} c="#c0c0c4"><path d="M1 1h14v14H1zM1 4h14M1 12h14M8 1v3M8 12v3" /></Ic></Slot>
      <Slot $w={26}><Ic w={15} h={14} c="#c0c0c4"><path d="M1 1h14v14H1zM1 4.500h14M1 8h14M1 11.500h14M4.500 1v14M8 1v14M11.500 1v14" strokeWidth="1" /></Ic></Slot>
      <Sep $w={6} />
      <Slot $w={26}><Field /></Slot>
      <Slot $w={26}><Glyph $b $s={12}>ab</Glyph></Slot>
      <Slot $w={26}><svg width="14" height="14" stroke="#333" strokeWidth="2"><path d="M0 1h12M0 5h14M0 9h10M0 13h13" /></svg></Slot>
      <Slot $w={26}><Fx /></Slot>
      <Slot $w={26}><svg width="14" height="14"><path d="M0 5h4v9H0zM5 0h4v14H5zM10 3h4v11h-4z" fill="#333" /></svg></Slot>
      <Slot $w={26}><svg width="16" height="14"><rect x=".7" y=".7" width="14.600" height="12.600" fill="#fff" stroke="#333" strokeWidth="1.400" /><path d="M1.500 9l3-2 2 1.500L10 5l4.500 4v3.500h-13z" fill="#3cb4f5" /><circle cx="4" cy="3.800" r="1.400" fill="#f5b83c" /></svg></Slot>
      <Slot $w={26}><Ic w={14} h={14}><path d="M1 1l13 8M1 1l8 14M1 1l3 0" /></Ic></Slot>
      <Slot $w={26}><svg width="12" height="14"><rect x=".7" y=".7" width="10.600" height="12.600" fill="#fff" stroke="#777" /><path d="M2 3h8M2 11.500h8" stroke="#333" strokeWidth="1.200" /><path d="M2 5h8v5H2z" fill="#8cc4ff" /><path d="M2 9l3-2 2 1 1-1 2 2v1H2z" fill="#0a5fae" /></svg></Slot>
      <Slot $w={24}><Frame c="#444" w={16} /></Slot><Down /><Sep $w={15} />
    </Tools>
  </>
);

const ComboGlyph = () => <svg width="16" height="10"><rect x=".7" y=".7" width="14.600" height="8.600" fill="#b8c4d8" stroke="#3a5888" /><rect x="6" y="1" width="9" height="8" fill="#7f9cc4" /><path d="M8 3h6l-3 4z" fill="#122c6c" /></svg>;

const ParamPane = () => (
  <Canvas>
    <Ruler>
      {Array.from({ length: 13 }, (_, u) => (
        <Unit key={u}>
          {Array.from({ length: 10 }, (_, i) => <Tick key={i} $h={i === 0 ? 16 : i === 5 ? 11 : 5} />)}
          <RulerNum>{u * 100}</RulerNum>
        </Unit>
      ))}
      <Tick $h={16} />
    </Ruler>
    <SideRuler>
      <SideNum>0</SideNum>
      {[4, 4, 4, 4, 10, 4, 4, 4].map((w, i) => <SideTick key={i} $w={w} />)}
    </SideRuler>
    <Bound />
    <Widget $x={80} $y={42}>
      <WBox $w={81} $pl={25}><T>区域:</T></WBox><WBox $w={60} $pl={2}><WCaret /></WBox><WBtn><ComboGlyph /></WBtn>
    </Widget>
    <Widget $x={315} $y={46}>
      <WBox $w={81} $pl={6}><T>显示前几名:</T></WBox><WBox $w={60} $pl={2}><WCaret /></WBox><WBtn><ComboGlyph /></WBtn>
    </Widget>
    <Widget $x={694} $y={46}><QueryBtn><T>查询</T></QueryBtn></Widget>
    <Widget $x={625} $y={32}>
      <svg width="34" height="30" viewBox="0 0 34 30"><path d="M1.500 17Q8 6.500 17 6.500T32.500 17Q26 26 17 26T1.500 17z" fill="none" stroke="#333" strokeWidth="3" /><path d="M8 14a9 9 0 0 1 17-3l-1 8a9 9 0 0 1-8 6 9 9 0 0 1-8-11z" fill="#333" /><path d="M3 30L32 0" stroke="#b0b0b0" strokeWidth="6" /><path d="M1.500 29L31 0" stroke="#333" strokeWidth="2.500" /></svg>
    </Widget>
    <Widget $x={676} $y={32}>
      <svg width="32" height="30" viewBox="0 0 32 30"><path d="M1 29l2-10L20 4l8 7L10 26z" fill="#333" /><path d="M8 21L21 9" stroke="#b0b0b0" strokeWidth="2" /><path d="M22 2q4-4 8 0 3 3-1 7z" fill="#333" /></svg>
    </Widget>
  </Canvas>
);

const SheetView = () => (
  <Sheet>
    <Grid>
      <GRow $h={20}>
        <Head $w={25} $bg="#f5f5f8"><svg width="11" height="9" fill="#999">{[0, 4, 8].map(x => [0, 3.500, 7].map(y => <rect key={x + '-' + y} x={x} y={y} width="2" height="2" />))}</svg></Head>
        {letters.map(l => <Head key={l} $w={colW(l)} $bg={l === 'B' ? '#cfeffb' : 'ACD'.includes(l) ? '#e8e8e8' : '#fff'}><T>{l}</T></Head>)}
        <Head $w={10} />
      </GRow>
      {heights.map((h, i) => (
        <GRow key={i} $h={h}>
          <RowNo $w={25} $bg={i === 3 ? '#cfeffb' : '#fff'}><T>{String(i + 1)}</T></RowNo>
          {i === 0 && <Cell $w={386} $pl={3}><T size={26} bold>分公司业绩排名</T></Cell>}
          {i === 1 && <Cell $w={386} $pl={4}><T size={26} bold>【单位：元】</T></Cell>}
          {i === 2 && headers.map(([t, w]) => <Cell key={t} $w={w} $bg={blue} $pl={3}><T size={15} color="#e9f6ff">{t}</T></Cell>)}
          {i === 3 && <>
            <Cell $w={90}><Corner width="7" height="7"><path d="M0 0h7L0 7z" fill="#f0143c" /></Corner></Cell>
            <Cell $w={116}><T size={15}>ds2.S(分公司)</T><Corner $b width="8" height="8"><path d="M0 0v8h8z" fill="#f5b400" /></Corner></Cell>
            <Cell $w={90} $top><Clip><T size={15}>ds1.求和(绩</T></Clip><Clip><T size={15}>效业绩)</T></Clip><Corner $b width="5" height="5"><path d="M0 0v5h5z" fill="#f5b400" /></Corner></Cell>
            <Cell $w={90}><GroupArrow /><T size={15}>ds2.G(战区)</T></Cell>
          </>}
          {i > 3 && letters.slice(0, 4).map(l => <Cell key={l} $w={colW(l)} />)}
          {rest.map(l => <Cell key={l} $w={90} />)}
          <Cell $w={10} />
        </GRow>
      ))}
      <GRow $h={4}><RowNo $w={25} />{letters.map(l => <Cell key={l} $w={colW(l)} />)}</GRow>
      <PageBreak />
      <Selection />
      <Marker $x={109} $y={143} $w={126} $h={37} />
    </Grid>
    <VScroll>
      <Arrow $w={16} $h={17}><Chevron r={180} /></Arrow>
      <Thumb $w={15} $h={684} />
      <Spacer />
      <Arrow $w={15} $h={15}><Chevron /></Arrow>
    </VScroll>
  </Sheet>
);

const BottomBars = () => (
  <>
    <HScroll>
      <Arrow $w={16} $h={15}><Chevron r={90} /></Arrow><Thumb $w={1213} $h={15} /><Spacer /><Arrow $w={15} $h={15}><Chevron r={-90} /></Arrow>
    </HScroll>
    <SheetBar>
      <SheetTab><Logo s={8} /><T color="#555">sheet1</T></SheetTab>
      <Spacer $w={12} />
      <svg width="23" height="13"><rect x=".7" y="1.700" width="19" height="10" fill="#f5f5f7" stroke="#444" /><path d="M2 3h3v8H2z" fill="#0a5fae" /><path d="M5 6l4-3v6l-3 2z" fill="#22a0e6" /><circle cx="17.500" cy="8" r="4.600" fill="#23b95c" /><path d="M15 8h5M17.500 5.500v5" stroke="#fff" strokeWidth="1.300" /></svg>
      <Spacer $w={7} />
      <svg width="23" height="13"><rect x=".7" y="1.700" width="19" height="10" fill="#f5f5f7" stroke="#444" /><path d="M3 3.500h3v2H3zM8 3.500h3v2H8zM3 7.500h8v2.500H3z" fill="none" stroke="#444" /><circle cx="17.500" cy="8" r="4.600" fill="#23b95c" /><path d="M15 8h5M17.500 5.500v5" stroke="#fff" strokeWidth="1.300" /></svg>
      <Spacer />
      <Tri d="left" w={4} h={8} /><Spacer $w={20} /><Tri d="right" w={4} h={8} />
      <Spacer $w={18} /><svg width="10" height="10" stroke="#333" strokeWidth="1.400"><path d="M0 5h10" /></svg><Spacer $w={8} />
      <Track><Knob /></Track><Spacer $w={14} />
      <Plus s={10} w={1.700} /><Spacer $w={8} /><ZoomBox>100</ZoomBox><Slot $w={15}><T>%</T></Slot>
    </SheetBar>
  </>
);

const RightSide = () => (
  <>
    <Rail>
      <RailToggle><Tri d="right" w={5} h={10} c="#a0a0a0" /></RailToggle>
      <RailItem><CellFrame /></RailItem>
      <RailItem $on><svg width="17" height="17"><path d="M0 0h5v4H0zM6 0h4v4H6zM11 0h5v4h-5zM0 6h5v4H0zM0 12h5v4H0z" fill="#419bf9" /><circle cx="11" cy="11" r="5.500" fill="#419bf9" /><path d="M11 7v2M11 10v4" stroke="#fff" strokeWidth="1.800" /></svg></RailItem>
      <RailItem><Frame /></RailItem>
      <RailItem><svg width="17" height="13"><rect x="1" y="1" width="14.500" height="11" fill="none" stroke="#5b5b66" strokeWidth="1.600" /><path d="M8 4h5l-2.500 4z" fill="#5b5b66" /></svg></RailItem>
      <RailItem><svg width="19" height="13" fill="none" stroke="#5b5b66"><path d="M4 3H1v8h3" /><rect x="6" y="1" width="12" height="3.600" rx="1" strokeWidth="1.800" /><rect x="6" y="8" width="9" height="3.600" rx="1" strokeWidth="1.800" /></svg></RailItem>
      <RailItem><Ic w={17} h={17} c="#5b5b66" sw={1.9}><rect x="-4" y="-2.600" width="8.500" height="5.200" rx="2.600" transform="translate(5 5) rotate(45)" /><rect x="-4.500" y="-2.600" width="8.500" height="5.200" rx="2.600" transform="translate(11 11) rotate(45)" /></Ic></RailItem>
    </Rail>
    <RightPane>
      <Tools $h={27} $pl={10} $line><T>单元格属性</T><Spacer /><svg width="11" height="12" stroke="#419bf9" strokeWidth="1.800" fill="none"><path d="M10.500.500L1.500 10.500M1 5v6h6" /></svg><Spacer $w={6} /></Tools>
      <PropTabs><PropTab $on><T>扩展</T></PropTab>{['样式', '形态', '其他'].map(t => <PropTab key={t}><T>{t}</T></PropTab>)}</PropTabs>
      <Section $mt={10}><T>基本</T><Tri /></Section>
      <PRow $mt={11} $lab={68} $lift={6}><T>扩展方向</T>
        <Segments>
          <Slot $w={51}><Ic w={16} h={16} c="#444" sw={1.6}><circle cx="8" cy="8" r="7" /><path d="M3 13L13 3" /></Ic></Slot>
          <Slot $w={51} $bg="#419bf9"><svg width="16" height="16" fill="none" stroke="#fff" strokeWidth="1.300"><path d="M6 1h4v14H6z" fill="#22b4e8" /><path d="M.7.7h14.600v14.600H.7zM.7 5.500h14.600M.7 10.500h14.600M5.500 0v16M10.500 0v16" /></svg></Slot>
          <Slot $w={51}><svg width="16" height="16" fill="none" stroke="#222" strokeWidth="1.300"><path d="M1 5.500h14v5H1z" fill="#1f6fa8" /><path d="M.7.7h14.600v14.600H.7zM.7 5.500h14.600M.7 10.500h14.600M5.500 0v16M10.500 0v16" /></svg></Slot>
        </Segments></PRow>
      <PRow $mt={11} $lab={68} $lift={5}><T>左父格</T><Combo w={156}>默认</Combo></PRow>
      <PRow $mt={14} $lab={68} $lift={5}><T>上父格</T><Combo w={156}>默认</Combo></PRow>
      <Section $mt={14}><T>高级</T><Tri /></Section>
      <PRow $mt={7} $pl={11}><Check on /><Spacer $w={4} /><T>横向可伸展</T></PRow>
      <PRow $mt={5} $pl={11}><Check on /><Spacer $w={4} /><T>纵向可伸展</T></PRow>
      <Section $mt={18}><T>扩展后排序</T><Tri /></Section>
      <SortBox>
        <SortHead><Tri w={10} h={6} c="#777" /><T>主要排列序</T><Spacer /><CloseX c="#777" w={2.2} /></SortHead>
        <PRow $mt={4} $pl={5} $lab={62} $lift={2}><T>排序区域</T><CellFrame c="#777" /><RefInput $w={54}>C</RefInput><RefInput $w={52}>4</RefInput>
          <RefInput $w={23} $bg="#fff"><svg width="16" height="17"><path d="M1 1.500h11v8H1z" fill="none" stroke="#bbb" strokeDasharray="1.500 1" /><path d="M10 6l6 6h-3l1.500 3-1.500.8-1.500-3L10 15z" fill="#333" /></svg></RefInput></PRow>
        <PRow $mt={8} $pl={5} $lab={62} $lift={2}><T>排序依据</T><Combo w={147}>单元格</Combo></PRow>
        <PRow $mt={8} $pl={5} $lab={62} $lift={2}><T>排序规则</T><Combo w={147}>降序</Combo></PRow>
      </SortBox>
      <WideBtn><Plus /><T>添加次要排列序</T></WideBtn>
      <PRow $mt={15} $lab={62} $lift={3}><T>表头区域</T><Combo w={160}>无</Combo></PRow>
      <PRow $mt={2} $lab={62} $lift={2}><T>表头设置</T><Check /><Spacer $w={3} /><T>允许用户点击排列顺序</T></PRow>
    </RightPane>
  </>
);

const FilterDialog = () => (
  <Dialog>
    <DlgTitle><Label $size={14.700} $color="#919191">数据列</Label><CloseX s={13} c="#888" w={1} /></DlgTitle>
    <DlgTabs><DlgTab><T>基本</T></DlgTab><DlgTab $on><T>过滤</T></DlgTab><DlgTab><T>高级</T></DlgTab></DlgTabs>
    <DlgPanel>
      <Group $h={36}>
        <Legend><T>父格条件</T></Legend>
        <DRow $h={29} $pl={41}><Check on /><Spacer $w={4} /><T>将父格子作为过滤条件(适用于父子格来自于同一个数据集)</T></DRow>
      </Group>
      <Group $h={437}>
        <Legend><T>普通条件</T></Legend>
        <DRow $h={31} $pl={2} $line><FieldLabel $w={169}><T>类型:</T></FieldLabel><Radio on /><Spacer $w={4} /><T>普通</T><Spacer $w={279} /><Radio /><Spacer $w={4} /><T>公式</T></DRow>
        <DRow $h={20} $pl={1}><FieldLabel $w={181}><T>可选列:</T></FieldLabel><T>操作符:</T></DRow>
        <DRow $h={25} $pl={2} $line>
          <svg width="19" height="19"><path d="M3 8l4-5 3 3M7 1h8v6h-4M5 8l4-3 3 3" fill="#eed9b0" stroke="#333" /><path d="M15 16h5l-2.500 3z" fill="#222" /><text x="0" y="18" fontFamily="Open Sans" fontWeight="700" fontSize="7.500" fill="#222">ABC</text></svg>
          <Spacer $w={3} /><Combo w={153} pad={0}>战区</Combo><Spacer $w={6} /><Combo w={85} pad={0}>等于</Combo>
          <FxBtn><Fx /><Tri c="#222" w={5} h={3} /></FxBtn>
          <Formula>=IF(LEN($qy) = 0,NOFILTER,$qy)</Formula>
        </DRow>
        <DRow $h={43} $pl={360} $pt={9}><Radio on /><Spacer $w={4} /><T>与(AND)</T><Spacer $w={20} /><Radio /><Spacer $w={4} /><T>或(OR)</T><Spacer />
          <Btn $w={50}><Plus /><T>增加</T></Btn><Spacer $w={14} />
          <Btn $w={50}><svg width="15" height="15" fill="none"><path d="M10 2h4v12H1v-3M9 14v-4h5" stroke="#1f7fd0" strokeWidth="1.300" /><Gear c="#2fae4e" x={4.8} y={4.800} r={2.300} /></svg><T>修改</T></Btn>
        </DRow>
        <ListArea>
          <List><Picked><T color="#fff">(列名:战区) 等于 '=IF(LEN($qy) = 0,NOFILTER,$qy)'</T></Picked></List>
          <BtnCol>
            <Btn $w={74}><DelX /><T>删除</T></Btn>
            <Btn $w={74}><svg width="12" height="14"><path d="M6 14V3M1.500 6L6 1.500 10.500 6" stroke="#888" strokeWidth="2" fill="none" /></svg><T color="#999">上移</T></Btn>
            <Btn $w={74}><svg width="12" height="14"><path d="M6 0v11M1.500 8L6 12.500 10.500 8" stroke="#888" strokeWidth="2" fill="none" /></svg><T color="#999">下移</T></Btn>
            <Btn $w={74}><svg width="13" height="12" stroke="#888" strokeWidth="1.500" fill="none"><path d="M4 1Q-1 6 4 11M9 1q5 5 0 10" /></svg><T color="#999">添加括号</T></Btn>
            <Btn $w={74}><svg width="13" height="13" stroke="#888" strokeWidth="1.500" fill="none"><path d="M5 5Q2 8 6 12M10 4q4 4 0 8M1 1l6 6M8 2L1 6.500M4.500 0v5" /></svg><T color="#999">去掉括号</T></Btn>
          </BtnCol>
        </ListArea>
      </Group>
    </DlgPanel>
    <DlgFoot><Btn $w={44}><T>确定</T></Btn><Btn $w={44}><T>取消</T></Btn></DlgFoot>
  </Dialog>
);

const apps: React.ReactNode[] = [
  <svg width="29" height="29"><defs><linearGradient id="w" x1="0" y1="0" x2="1" y2="1"><stop offset="0" stopColor="#8be0ff" /><stop offset="1" stopColor="#0a8cf5" /></linearGradient></defs><path d="M0 1q0-1 1-1h13v14H0zM15 0h13q1 0 1 1v13H15zM0 15h14v14H1q-1 0-1-1zM15 15h14v13q0 1-1 1H15z" fill="url(#w)" /></svg>,
  <svg width="30" height="30"><circle cx="15" cy="15" r="15" fill="#fbc116" /><path d="M15 15L2 7.500A15 15 0 0 1 28 7.500H15z" fill="#e33b2e" /><path d="M2 7.500A15 15 0 0 0 15 30l6.500-11.300L15 15z" fill="#22a04b" /><circle cx="15" cy="15" r="7.300" fill="#fff" /><circle cx="15" cy="15" r="5.800" fill="#2f7de8" /></svg>,
  <svg width="30" height="27"><path d="M0 1q0-1 1-1h9l3 3.500H0z" fill="#e2a010" /><path d="M0 4.500h12l2-1.500h15q1 0 1 1v22q0 1-1 1H1q-1 0-1-1z" fill="#ffcf3f" /><path d="M5 27v-6q0-2 2-2h16q2 0 2 2v6z" fill="#1277d4" /><path d="M9 23h12" stroke="#0a4f96" strokeWidth="1.400" /></svg>,
  <Wechat s={32} />,
  <svg width="30" height="28"><path d="M7 1q0-1 1-1h21q1 0 1 1v6H7z" fill="#41a5ee" /><path d="M7 7h23v7H7z" fill="#2b7cd3" /><path d="M7 14h23v7H7z" fill="#185abd" /><path d="M7 21h23v6q0 1-1 1H8q-1 0-1-1z" fill="#103f91" /><rect y="6.500" width="16" height="15" rx="1.500" fill="#1450b0" /><text x="8" y="18.500" textAnchor="middle" fontFamily="Open Sans" fontWeight="700" fontSize="12" fill="#fff">W</text></svg>,
  <svg width="30" height="30" viewBox="0 0 30 30"><path d="M0 10.500L3 8l19 14.500V30z" fill="#1389db" /><path d="M0 19.500L3 22 22 7.500V0z" fill="#0a78c8" /><path d="M22 0l8 3v24l-8 3z" fill="#2ba2f0" /></svg>,
  <Logo s={24} />,
  <svg width="28" height="28"><path d="M4 0q8 3 22 1 3 12 0 24-8-1-22 2-3 0-4-2Q4 14 4 0z" fill="#efefef" /><text x="14" y="20" textAnchor="middle" fontFamily="Liberation Serif" fontSize="18" fill="#333">T</text></svg>,
];

export default function App() {
  return (
    <Shell>
      <Global />
      <TitleBar>
        <Logo s={16} /><Spacer $w={7} />
        <TitleText $ls={-0.08} $w={381}>FineReport 11.0.17 stable 2023-06-09 @默认[本地目录]</TitleText>
        <TitleText $ls={-0.17} $w={800}>D:\App\FineReport_11.0\webapps\webroot\WEB-INF\reportlets/分公司业绩排名.cpt</TitleText>
        <Spacer />
        <WinCtl>
          <Slot $w={58}><svg width="12" height="2"><path d="M0 1h12" stroke="#888" /></svg></Slot>
          <Slot $w={58}><Ic w={13} h={13} c="#888" sw={1.1}><rect x="1" y="4" width="10.500" height="11" rx="2" /><path d="M4 3q0-2 2-2h6q3 0 3 3v6q0 2-2 2" /></Ic></Slot>
          <Slot $w={60}><CloseX s={12} c="#888" w={1} /></Slot>
          <Spacer $w={2} />
        </WinCtl>
      </TitleBar>
      <MenuBar>
        {menus.map(([t, w]) => <MenuItem key={t} $w={w}><T>{t}</T></MenuItem>)}
        <Spacer />
        <T>日志 | 严重:18:12:39 SwingWorker-pool-6-thread-6 ERROR [standard] 错误代码:11300005 模板文件解析...</T>
        <Spacer $w={12} /><Mag s={14} /><Spacer $w={11} />
        <svg width="12" height="14"><path d="M6 0q4 1 4 6v3l2 2H0l2-2V6Q2 1 6 0zM4.500 12h3L6 14z" fill="#444" /></svg>
        <Spacer $w={6} />
        <Account><T color="#111">GdGx7GGC</T></Account>
      </MenuBar>
      <Body>
        <LeftSide />
        <VSplit><Tri d="left" w={5} h={10} /><Grip $v /></VSplit>
        <Center>
          <Toolbars />
          <ParamPane />
          <Band />
          <SheetView />
          <BottomBars />
        </Center>
        <RightSide />
      </Body>
      <Taskbar>
        {apps.map((a, i) => <Launcher key={i}><AppIcon>{a}</AppIcon>{i > 0 && <Dot />}</Launcher>)}
        <Spacer />
        <Tray>
          <Slot $w={50}><svg width="28" height="28"><path d="M1 0l3 4v24H1zM27 0l-3 4v24h3zM7 28V9l7 10 7-10v19h-3.500V18L14 23l-3.500-5v10z" fill="#fff" /></svg></Slot>
          <Slot $w={48}><svg width="14" height="9" fill="none" stroke="#fff" strokeWidth="1.700"><path d="M1 8l6-6 6 6" /></svg></Slot>
          <Slot $w={36}><svg width="19" height="13"><path d="M0 0q3 3 5 3h7l2-2 1 1 3 1v2l-3 2 4 4h-3l-4-3-4 0-4 4-3 0 3-4-1-3Q1 4 0 0z" fill="#fff" /></svg></Slot>
          <Slot $w={41}><Wechat s={21} /></Slot>
          <Slot $w={39}><svg width="20" height="20"><rect width="20" height="20" rx="4" fill="#fff" /><path d="M3 5l5 1 2 3 2-4 5-1-2 4-3 1-1 3v4H8v-5L5 9z" fill="#12c06a" /></svg></Slot>
          <Slot $w={40}><Label $size={18} $color="#fff">英</Label></Slot>
          <Slot $w={40}><svg width="20" height="16" fill="none" stroke="#fff" strokeWidth="1.400"><path d="M1 6q9-9 18 0M4 9q6-6 12 0M7 12q3-3 6 0" /><circle cx="10" cy="14" r="1.300" fill="#fff" stroke="none" /></svg></Slot>
          <Slot $w={20}><svg width="19" height="16" fill="none" stroke="#fff" strokeWidth="1.300"><path d="M1 5.500h3L8 2v12l-4-3.500H1zM10.500 5.500q2 2.500 0 5M13 3.500q3.500 4.500 0 9" /><path d="M15.500 1.500q5 6.500 0 13" stroke="#777" /></svg></Slot>
          <Slot $w={40}><svg width="20" height="17" fill="none" stroke="#fff" strokeWidth="1.400"><path d="M6 4h8q3 0 3 3v5q0 3-3 3H4q-3 0-3-3v-2M18.500 7.500v4" /><path d="M7 6h8v7H4z" fill="#fff" stroke="none" /><path d="M4 0L1 6h3L3 10l5-6H5z" fill="#fff" stroke="none" /></svg></Slot>
          <Clock><span>20:33</span><span>2024/10/26</span></Clock>
          <Slot $w={38}><svg width="16" height="18" fill="none" stroke="#fff" strokeWidth="1.300"><path d="M8 1q5 0 5 5.500 0 4 2 7H1q2-3 2-7Q3 1 8 1zM5.500 14q.5 3 2.500 3t2.500-3" /></svg></Slot>
          <Spacer $w={16} />
        </Tray>
      </Taskbar>
      <FilterDialog />
      <Marker $x={873} $y={502} $w={334} $h={36} />
    </Shell>
  );
}
